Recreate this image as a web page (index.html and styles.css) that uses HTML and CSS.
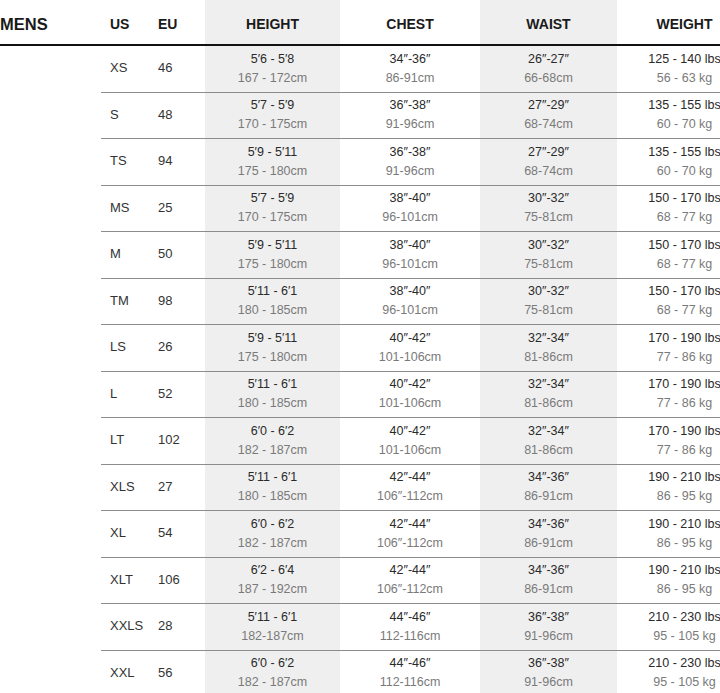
FILE: index.html
```html
<!DOCTYPE html>
<html>
<head>
<meta charset="utf-8">
<link rel="stylesheet" href="styles.css">
</head>
<body>
<div class="wrap">
<table class="chart">
  <colgroup>
    <col class="c-label"><col class="c-us"><col class="c-eu"><col class="c-h"><col class="c-c"><col class="c-w"><col class="c-wt">
  </colgroup>
  <thead>
    <tr>
      <th class="label">MENS</th>
      <th class="left">US</th>
      <th class="left">EU</th>
      <th class="shade">HEIGHT</th>
      <th>CHEST</th>
      <th class="shade">WAIST</th>
      <th>WEIGHT</th>
    </tr>
  </thead>
  <tbody id="rows"></tbody>
</table>
</div>
<script src="script.js"></script>
</body>
</html>
```
FILE: script.js
```js
var data = [
  ["XS","46","5′6 - 5′8","167 - 172cm","34″-36″","86-91cm","26″-27″","66-68cm","125 - 140 lbs","56 - 63 kg"],
  ["S","48","5′7 - 5′9","170 - 175cm","36″-38″","91-96cm","27″-29″","68-74cm","135 - 155 lbs","60 - 70 kg"],
  ["TS","94","5′9 - 5′11","175 - 180cm","36″-38″","91-96cm","27″-29″","68-74cm","135 - 155 lbs","60 - 70 kg"],
  ["MS","25","5′7 - 5′9","170 - 175cm","38″-40″","96-101cm","30″-32″","75-81cm","150 - 170 lbs","68 - 77 kg"],
  ["M","50","5′9 - 5′11","175 - 180cm","38″-40″","96-101cm","30″-32″","75-81cm","150 - 170 lbs","68 - 77 kg"],
  ["TM","98","5′11 - 6′1","180 - 185cm","38″-40″","96-101cm","30″-32″","75-81cm","150 - 170 lbs","68 - 77 kg"],
  ["LS","26","5′9 - 5′11","175 - 180cm","40″-42″","101-106cm","32″-34″","81-86cm","170 - 190 lbs","77 - 86 kg"],
  ["L","52","5′11 - 6′1","180 - 185cm","40″-42″","101-106cm","32″-34″","81-86cm","170 - 190 lbs","77 - 86 kg"],
  ["LT","102","6′0 - 6′2","182 - 187cm","40″-42″","101-106cm","32″-34″","81-86cm","170 - 190 lbs","77 - 86 kg"],
  ["XLS","27","5′11 - 6′1","180 - 185cm","42″-44″","106″-112cm","34″-36″","86-91cm","190 - 210 lbs","86 - 95 kg"],
  ["XL","54","6′0 - 6′2","182 - 187cm","42″-44″","106″-112cm","34″-36″","86-91cm","190 - 210 lbs","86 - 95 kg"],
  ["XLT","106","6′2 - 6′4","187 - 192cm","42″-44″","106″-112cm","34″-36″","86-91cm","190 - 210 lbs","86 - 95 kg"],
  ["XXLS","28","5′11 - 6′1","182-187cm","44″-46″","112-116cm","36″-38″","91-96cm","210 - 230 lbs","95 - 105 kg"],
  ["XXL","56","6′0 - 6′2","182 - 187cm","44″-46″","112-116cm","36″-38″","91-96cm","210 - 230 lbs","95 - 105 kg"]
];
var tb = document.getElementById("rows");
var html = "";
data.forEach(function (r) {
  function pair(a, b, cls) {
    return '<td class="val' + (cls ? " " + cls : "") + '"><div class="top">' + a + '</div><div class="bot">' + b + '</div></td>';
  }
  html += '<tr><td class="blank"></td><td class="sz">' + r[0] + '</td><td class="sz">' + r[1] + '</td>' +
    pair(r[2], r[3], "shade") + pair(r[4], r[5]) + pair(r[6], r[7], "shade") + pair(r[8], r[9]) + '</tr>';
});
tb.innerHTML = html;
```
FILE: styles.css
```css
html, body {
  margin: 0;
  padding: 0;
  background: #fff;
  overflow: hidden;
}
.wrap {
  width: 720px;
  height: 693px;
  overflow: hidden;
}
.chart {
  width: 752px;
  table-layout: fixed;
  border-collapse: collapse;
  font-family: "Liberation Sans", Arial, sans-serif;
  color: #2a2a2a;
}
.c-label { width: 101px; }
.c-us { width: 49px; }
.c-eu { width: 55px; }
.c-h { width: 135px; }
.c-c { width: 140px; }
.c-w { width: 137px; }
.c-wt { width: 135px; }

.chart th {
  height: 40px;
  padding: 4px 0 0 0;
  font-size: 14px;
  line-height: 16px;
  font-weight: bold;
  text-align: center;
  vertical-align: middle;
  border-bottom: 2px solid #111;
  color: #1a1a1a;
}
.chart th.label {
  text-align: left;
  font-size: 16.5px;
  padding-left: 0;
}
.chart th.left {
  text-align: left;
  padding-left: 9px;
}
.chart th:nth-child(3) { padding-left: 8px; }
.shade { background: #efefef; }

.chart tbody tr { height: 45.5px; }
.chart td {
  height: 44.5px;
  padding: 0;
  vertical-align: middle;
  border-bottom: 1px solid #8c8c8c;
}
.chart td.blank { border-bottom: none; }
.chart tbody tr:last-child td { border-bottom: none; }
.chart td.sz {
  font-size: 13px;
  line-height: 16px;
  color: #333;
  padding-left: 9px;
  padding-bottom: 1px;
}
.chart td.sz + td.sz { padding-left: 8px; }
.val {
  text-align: center;
  font-size: 12.5px;
}
.val .top, .val .bot {
  height: 19px;
  line-height: 19px;
  overflow: hidden;
  white-space: nowrap;
}
.val .top { color: #2a2a2a; }
.val .bot { color: #7a7a7a; }
```
